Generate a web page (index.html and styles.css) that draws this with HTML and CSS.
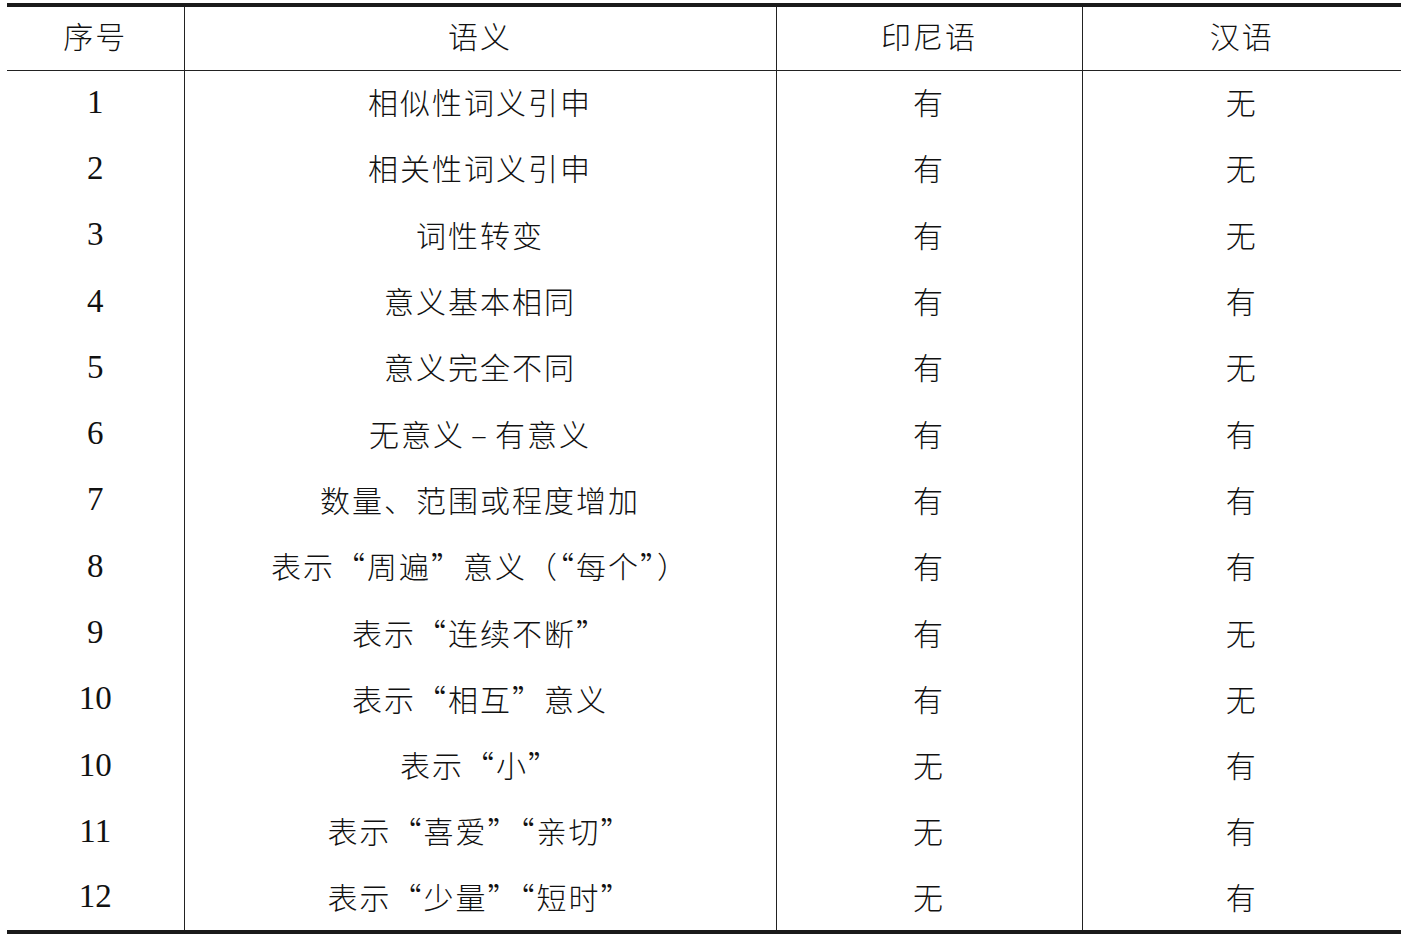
FILE: index.html
```html
<!DOCTYPE html>
<html lang="zh-CN">
<head>
<meta charset="utf-8">
<title>语义对比表</title>
<link rel="stylesheet" href="styles.css">
</head>
<body>
<table class="tbl">
  <colgroup>
    <col class="c1"><col class="c2"><col class="c3"><col class="c4">
  </colgroup>
  <thead>
    <tr><th>序号</th><th>语义</th><th>印尼语</th><th>汉语</th></tr>
  </thead>
  <tbody>
    <tr><td class="num">1</td><td>相似性词义引申</td><td>有</td><td>无</td></tr>
    <tr><td class="num">2</td><td>相关性词义引申</td><td>有</td><td>无</td></tr>
    <tr><td class="num">3</td><td>词性转变</td><td>有</td><td>无</td></tr>
    <tr><td class="num">4</td><td>意义基本相同</td><td>有</td><td>有</td></tr>
    <tr><td class="num">5</td><td>意义完全不同</td><td>有</td><td>无</td></tr>
    <tr><td class="num">6</td><td>无意义<span class="dash">–</span>有意义</td><td>有</td><td>有</td></tr>
    <tr><td class="num">7</td><td>数量、范围或程度增加</td><td>有</td><td>有</td></tr>
    <tr><td class="num">8</td><td>表示“周遍”意义（“每个”）</td><td>有</td><td>有</td></tr>
    <tr><td class="num">9</td><td>表示“连续不断”</td><td>有</td><td>无</td></tr>
    <tr><td class="num">10</td><td>表示“相互”意义</td><td>有</td><td>无</td></tr>
    <tr><td class="num">10</td><td>表示“小”</td><td>无</td><td>有</td></tr>
    <tr><td class="num">11</td><td>表示“喜爱”“亲切”</td><td>无</td><td>有</td></tr>
    <tr><td class="num">12</td><td>表示“少量”“短时”</td><td>无</td><td>有</td></tr>
  </tbody>
</table>
</body>
</html>
```

FILE: styles.css
```css
html, body {
  margin: 0;
  padding: 0;
  background: #ffffff;
}

body {
  padding: 3px 0 0 7px;
  color: #111111;
  font-family: "Noto Sans CJK SC", "Liberation Serif", serif;
  font-weight: 300;
}

.tbl {
  border-collapse: collapse;
  table-layout: fixed;
  width: 1394px;
  border-top: 4px solid #1a1a1a;
  border-bottom: 4px solid #1a1a1a;
}

.c1 { width: 177px; }
.c2 { width: 592px; }
.c3 { width: 306px; }
.c4 { width: 319px; }

.tbl th,
.tbl td {
  padding: 0 0 4px 0;
  text-align: center;
  vertical-align: middle;
  font-size: 30px;
  font-weight: 300;
  letter-spacing: 2px;
  border-left: 1px solid #222222;
  white-space: nowrap;
}

.tbl th:first-child,
.tbl td:first-child {
  border-left: none;
}

.tbl thead tr {
  height: 65px;
}

.tbl thead th {
  border-bottom: 1px solid #222222;
  padding-bottom: 6px;
}

.tbl tbody tr {
  height: 66.3px;
}

.tbl td.num {
  font-family: "Liberation Serif", "Times New Roman", serif;
  font-size: 33px;
  font-weight: 400;
  letter-spacing: 0;
  padding-bottom: 2px;
}

.dash {
  padding: 0 6px;
}
```
